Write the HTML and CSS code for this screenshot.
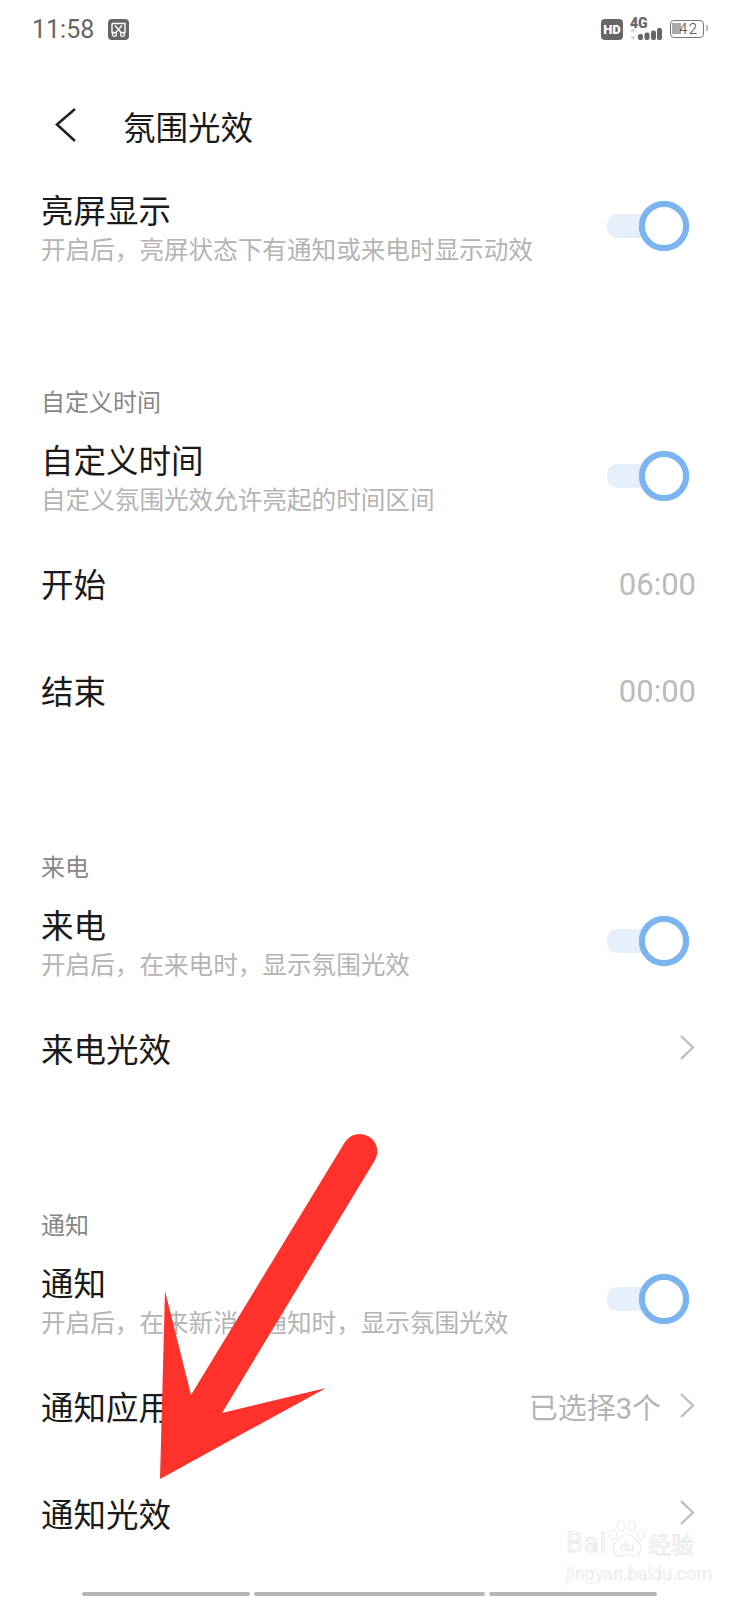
FILE: index.html
```html
<!DOCTYPE html>
<html lang="zh-CN">
<head>
  <meta charset="UTF-8">
  <meta name="viewport" content="width=device-width, initial-scale=1.0">
  <title>氛围光效</title>
  <link rel="stylesheet" href="styles.css">
</head>
<body>

<div class="phone">

  <!-- Status bar -->
  <div class="status-bar">
    <div class="status-left">
      <span class="clock">11:58</span>
      <svg class="status-icon" width="21" height="21" viewBox="0 0 21 21">
        <rect width="21" height="21" rx="4" fill="#666"/>
        <path d="M4 4.5h13v9h-3M4 4.5v9h3" fill="none" stroke="#fff" stroke-width="1.4"/>
        <path d="M7 6.5l6.5 7.5M14 6.5l-6.5 7.5" fill="none" stroke="#fff" stroke-width="1.3"/>
        <circle cx="6.5" cy="15.5" r="1.9" fill="none" stroke="#fff" stroke-width="1.2"/>
        <circle cx="14.5" cy="15.5" r="1.9" fill="none" stroke="#fff" stroke-width="1.2"/>
      </svg>
    </div>
    <div class="status-right">
      <span class="hd-badge">HD</span>
      <div class="signal">
        <span class="signal-label">4G</span>
        <svg width="32" height="12" viewBox="0 0 32 12">
          <path d="M3 0.500l2.500 3h-5zM3 11.500l2.500-3h-5z" fill="#ccc"/>
          <rect x="8" y="6" width="5" height="6" rx="2" fill="#666"/>
          <rect x="14.500" y="4.500" width="5" height="7.500" rx="2" fill="#666"/>
          <rect x="21" y="2.500" width="5" height="9.500" rx="2" fill="#666"/>
          <rect x="27" y="0" width="5" height="12" rx="2" fill="#666"/>
        </svg>
      </div>
      <div class="battery">
        <span class="battery-fill"></span>
        <span class="battery-text">42</span>
        <span class="battery-cap"></span>
      </div>
    </div>
  </div>

  <!-- Header -->
  <div class="header">
    <svg class="back" width="24" height="38" viewBox="0 0 24 38">
      <path d="M21 3L3 18.500 21 35" fill="none" stroke="#222" stroke-width="2.600"/>
    </svg>
    <h1>氛围光效</h1>
  </div>

  <!-- Screen on -->
  <div class="row-double">
    <div class="row-text">
      <div class="row-title">亮屏显示</div>
      <div class="row-sub">开启后，亮屏状态下有通知或来电时显示动效</div>
    </div>
    <div class="toggle"><span class="toggle-track"></span><span class="toggle-knob"></span></div>
  </div>

  <!-- Custom time -->
  <div class="group group-first">
    <div class="group-label">自定义时间</div>
    <div class="row-double">
      <div class="row-text">
        <div class="row-title">自定义时间</div>
        <div class="row-sub">自定义氛围光效允许亮起的时间区间</div>
      </div>
      <div class="toggle"><span class="toggle-track"></span><span class="toggle-knob"></span></div>
    </div>
    <div class="row first">
      <span class="row-title">开始</span>
      <span class="time">06:00</span>
    </div>
    <div class="row">
      <span class="row-title">结束</span>
      <span class="time">00:00</span>
    </div>
  </div>

  <!-- Calls -->
  <div class="group">
    <div class="group-label">来电</div>
    <div class="row-double">
      <div class="row-text">
        <div class="row-title">来电</div>
        <div class="row-sub">开启后，在来电时，显示氛围光效</div>
      </div>
      <div class="toggle"><span class="toggle-track"></span><span class="toggle-knob"></span></div>
    </div>
    <div class="row first">
      <span class="row-title">来电光效</span>
      <svg class="chevron" width="16" height="27" viewBox="0 0 16 27"><path d="M2 2l12 11.500L2 25" fill="none" stroke="#bdbdbd" stroke-width="2.200"/></svg>
    </div>
  </div>

  <!-- Notifications -->
  <div class="group">
    <div class="group-label">通知</div>
    <div class="row-double">
      <div class="row-text">
        <div class="row-title">通知</div>
        <div class="row-sub">开启后，在来新消息通知时，显示氛围光效</div>
      </div>
      <div class="toggle"><span class="toggle-track"></span><span class="toggle-knob"></span></div>
    </div>
    <div class="row first">
      <span class="row-title">通知应用</span>
      <span class="row-value">
        <span class="selected">已选择3个</span>
        <svg class="chevron" width="16" height="27" viewBox="0 0 16 27"><path d="M2 2l12 11.500L2 25" fill="none" stroke="#bdbdbd" stroke-width="2.200"/></svg>
      </span>
    </div>
    <div class="row">
      <span class="row-title">通知光效</span>
      <svg class="chevron" width="16" height="27" viewBox="0 0 16 27"><path d="M2 2l12 11.500L2 25" fill="none" stroke="#bdbdbd" stroke-width="2.200"/></svg>
    </div>
  </div>

  <!-- Home bar -->
  <div class="home-bar">
    <span class="home-seg seg-a"></span>
    <span class="home-seg seg-b"></span>
    <span class="home-seg seg-a"></span>
  </div>

  <!-- Red arrow drawn over the screenshot -->
  <svg class="arrow" width="738" height="1600" viewBox="0 0 738 1600">
    <path d="M345 1142A17.500 17.500 0 0 1 375 1160L222 1413 326 1388 160 1479 165 1291 191 1395Z" fill="#fe322b"/>
  </svg>

  <!-- Watermark -->
  <div class="watermark">
    <div class="wm-top">
      <span class="wm-bai">Bai</span>
      <svg class="wm-paw" width="38" height="38" viewBox="0 0 38 38">
        <g fill="#fff" stroke="#ebebeb" stroke-width="1.200">
          <ellipse cx="5" cy="15" rx="3.500" ry="5"/>
          <ellipse cx="13" cy="6" rx="3.500" ry="5"/>
          <ellipse cx="24" cy="6" rx="3.500" ry="5"/>
          <ellipse cx="33" cy="15" rx="3.500" ry="5"/>
          <path d="M19 14c-5 0-8 5-11 8-5 5-3 14 4 14 3 0 5-1 7-1s4 1 7 1c7 0 9-9 4-14-3-3-6-8-11-8z"/>
        </g>
        <text class="wm-du" x="19" y="31" text-anchor="middle">du</text>
      </svg>
      <span class="wm-cn">经验</span>
    </div>
    <div class="wm-url">jingyan.baidu.com</div>
  </div>

</div>

</body>
</html>
```

FILE: styles.css
```css
/* Global Styles */
html, body {
  margin: 0;
  padding: 0;
}
body {
  background-color: #ffffff;
  font-family: "Noto Sans CJK SC", "Noto Sans", sans-serif;
}
.phone {
  position: relative;
  width: 738px;
  height: 1600px;
  overflow: hidden;
  background-color: #fff;
}

/* Status bar */
.status-bar {
  height: 58px;
  display: flex;
  justify-content: space-between;
  align-items: center;
  padding: 0 34px 0 32px;
  box-sizing: border-box;
}
.status-left, .status-right {
  display: flex;
  align-items: center;
}
.clock {
  font-family: Roboto, sans-serif;
  font-size: 25px;
  color: #666;
  margin-right: 14px;
}
.hd-badge {
  width: 22px;
  height: 21px;
  border-radius: 4px;
  background-color: #666;
  color: #fff;
  font-family: Roboto, sans-serif;
  font-size: 13px;
  font-weight: 900;
  line-height: 21px;
  text-align: center;
}
.signal {
  width: 32px;
  margin-left: 7px;
  display: flex;
  flex-direction: column;
}
.signal-label {
  font-family: Roboto, sans-serif;
  font-size: 14px;
  font-weight: 900;
  line-height: 10px;
  color: #666;
}
.battery {
  position: relative;
  width: 34px;
  height: 18px;
  margin-left: 8px;
  border: 1.500px solid #777;
  border-radius: 4px;
  box-sizing: border-box;
}
.battery-fill {
  position: absolute;
  left: 1px;
  top: 1.500px;
  width: 9px;
  height: 11px;
  background-color: #aaa;
}
.battery-text {
  position: absolute;
  left: 8px;
  top: -1.500px;
  font-family: Roboto, sans-serif;
  font-size: 15px;
  font-weight: 300;
  line-height: 18px;
  letter-spacing: 1.500px;
  color: #444;
}
.battery-cap {
  position: absolute;
  right: -4.500px;
  top: 4px;
  width: 2px;
  height: 6px;
  background-color: #bbb;
}

/* Header */
.header {
  height: 134px;
  display: flex;
  align-items: center;
  padding-left: 54px;
}
.back {
  margin-right: 45px;
}
h1 {
  margin: 0;
  font-size: 32.500px;
  font-weight: 400;
  color: #1a1a1a;
}

/* Rows */
.row-double {
  height: 76px;
  display: flex;
  justify-content: space-between;
  align-items: center;
  padding: 0 49px 0 41px;
}
.row-text {
  align-self: flex-start;
}
.row-title {
  font-size: 32.500px;
  line-height: 34px;
  color: #1a1a1a;
}
.row-sub {
  font-size: 24.600px;
  line-height: 44px;
  color: #b4b4b4;
}
.row {
  height: 107px;
  display: flex;
  justify-content: space-between;
  align-items: center;
  padding: 0 42px 0 41px;
}
.row.first {
  margin-top: 11px;
}
.row .chevron {
  margin-right: 1px;
}
.row-value {
  display: flex;
  align-items: center;
}
.time {
  padding-top: 3px;
  font-family: Roboto, sans-serif;
  font-size: 31px;
  color: #bbb;
}
.selected {
  font-family: Roboto, "Noto Sans CJK SC", sans-serif;
  font-size: 29px;
  color: #b4b4b4;
  margin-right: 18px;
}

/* Groups */
.group {
  margin-top: 106px;
}
.group-first {
  margin-top: 116px;
}
.group-label {
  height: 34px;
  margin-bottom: 24px;
  padding-left: 41px;
  font-size: 24px;
  line-height: 34px;
  color: #888;
}

/* Toggle */
.toggle {
  position: relative;
  width: 82px;
  height: 50px;
  margin-top: -8px;
}
.toggle-track {
  position: absolute;
  left: 0;
  top: 13px;
  width: 50px;
  height: 24px;
  border-radius: 10px;
  background-color: #e6f0fb;
}
.toggle-knob {
  position: absolute;
  right: 0;
  top: 0;
  width: 50px;
  height: 50px;
  border: 6px solid #7cb4f0;
  border-radius: 50%;
  background-color: #fff;
  box-sizing: border-box;
  box-shadow: 0 0 1px #7cb4f0;
}

/* Home bar */
.home-bar {
  position: absolute;
  left: 82px;
  bottom: 4px;
  display: flex;
  gap: 4px;
}
.home-seg {
  height: 4px;
  border-radius: 2px;
  background-color: #b5b5b5;
}
.seg-a {
  width: 168px;
}
.seg-b {
  width: 231px;
}

/* Arrow overlay */
.arrow {
  position: absolute;
  left: 0;
  top: 0;
}

/* Watermark */
.watermark {
  position: absolute;
  left: 566px;
  top: 1520px;
  width: 140px;
}
.wm-top {
  display: flex;
  align-items: flex-end;
  height: 38px;
}
.wm-bai {
  font-family: Roboto, sans-serif;
  font-size: 27px;
  line-height: 30px;
  letter-spacing: 1px;
  color: #fff;
  -webkit-text-stroke: 1px #e8e8e8;
}
.wm-paw {
  margin: 0 2px 0 1px;
}
.wm-du {
  font-family: Roboto, sans-serif;
  font-size: 13px;
  fill: #e8e8e8;
}
.wm-cn {
  font-size: 23px;
  line-height: 30px;
  color: #fff;
  -webkit-text-stroke: 0.800px #e8e8e8;
}
.wm-url {
  margin-top: 6px;
  font-family: Roboto, sans-serif;
  font-size: 18px;
  line-height: 20px;
  color: #fff;
  -webkit-text-stroke: 0.700px #ebebeb;
}
```
